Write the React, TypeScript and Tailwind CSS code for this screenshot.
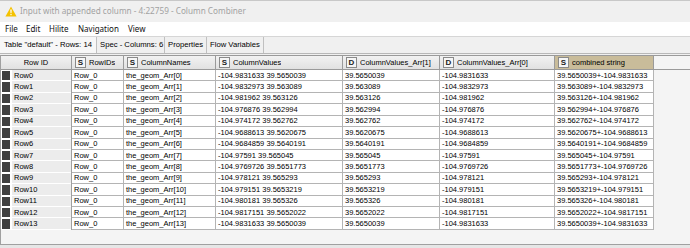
import React from "react";

const rows: [string, string, string][] = [
  ["-104.9831633", "39.5650039", "0"],
  ["-104.9832973", "39.563089", "1"],
  ["-104.981962", "39.563126", "2"],
  ["-104.976876", "39.562994", "3"],
  ["-104.974172", "39.562762", "4"],
  ["-104.9688613", "39.5620675", "5"],
  ["-104.9684859", "39.5640191", "6"],
  ["-104.97591", "39.565045", "7"],
  ["-104.9769726", "39.5651773", "8"],
  ["-104.978121", "39.565293", "9"],
  ["-104.979151", "39.5653219", "10"],
  ["-104.980181", "39.565326", "11"],
  ["-104.9817151", "39.5652022", "12"],
  ["-104.9831633", "39.5650039", "13"],
];

function TypeBox({ t }: { t: string }) {
  return (
    <span className="mr-[3px] flex h-[11px] w-[11px] shrink-0 items-center justify-center border border-[#8a8a8a] bg-[#f6f6f6] text-[8px] font-bold leading-none text-[#222]">
      {t}
    </span>
  );
}

function HeadCell({ t, label, w, tan }: { t: string; label: string; w: string; tan?: boolean }) {
  return (
    <div
      className={`flex h-full items-center border-r border-[#9a9a9a] pl-[3px] ${w} ${
        tan ? "bg-[#c9bc9a]" : "bg-gradient-to-b from-[#f2f2f2] to-[#e1e1e1]"
      }`}
    >
      <TypeBox t={t} />
      <span className="truncate">{label}</span>
    </div>
  );
}

export default function App() {
  return (
    <div
      className="flex h-[248px] w-[690px] flex-col overflow-hidden bg-[#f0f0f0] text-black"
      style={{ fontFamily: '"Liberation Sans", Arial, sans-serif' }}
    >
      {/* title bar */}
      <div
        className="flex h-[22px] shrink-0 items-center border-t border-[#c8c8c8] bg-[#f0f0f0] pl-[5px] text-[8.2px] text-[#a2a2a2]"
        style={{ fontFamily: '"Noto Sans", "Open Sans", sans-serif' }}
      >
        <svg width="12" height="11" viewBox="0 0 12 11" className="mr-[3px]">
          <path d="M6 0.5 L11.6 10.5 L0.4 10.5 Z" fill="#f4c200" />
          <path d="M5.3 3.5 H6.7 L6.5 7.3 H5.5 Z" fill="#fff" />
          <rect x="5.4" y="8" width="1.2" height="1.2" fill="#fff" />
        </svg>
        <span>Input with appended column - 4:22759 - Column Combiner</span>
      </div>
      {/* menu bar */}
      <div
        className="flex h-[15px] shrink-0 items-center border-b border-[#d6d6d6] bg-white pl-[5px] text-[8px] text-[#111]"
        style={{ fontFamily: '"Noto Sans", "Open Sans", sans-serif' }}
      >
        <span className="w-[21px]">File</span>
        <span className="w-[23px]">Edit</span>
        <span className="w-[29px]">Hilite</span>
        <span className="w-[50px]">Navigation</span>
        <span>View</span>
      </div>
      {/* tabs */}
      <div className="flex h-[17px] shrink-0 items-stretch border-b border-[#b8b8b8] bg-[#f0f0f0] text-[7.7px]">
        <div className="flex w-[97px] shrink-0 items-center whitespace-nowrap border-r border-[#c0c0c0] bg-[#f7f7f7] pl-[4px]">Table "default" - Rows: 14</div>
        <div className="flex w-[68px] shrink-0 items-center whitespace-nowrap border-r border-[#c0c0c0] pl-[3px]">Spec - Columns: 6</div>
        <div className="flex w-[42px] shrink-0 items-center whitespace-nowrap border-r border-[#c0c0c0] pl-[3px]">Properties</div>
        <div className="flex w-[57px] shrink-0 items-center whitespace-nowrap border-r border-[#c0c0c0] pl-[3px]">Flow Variables</div>
      </div>
      {/* table area */}
      <div className="mt-[1px] flex flex-1 flex-col border-l border-b border-[#a0a0a0] bg-[#f4f4f4] text-[7.5px]">
        {/* header */}
        <div className="flex h-[15px] shrink-0 items-stretch border-y border-[#9a9a9a]">
          <div className="flex w-[71px] items-center justify-center border-r border-[#9a9a9a] bg-gradient-to-b from-[#f2f2f2] to-[#e1e1e1]">
            Row ID
          </div>
          <HeadCell t="S" label="RowIDs" w="w-[52px]" />
          <HeadCell t="S" label="ColumnNames" w="w-[92px]" />
          <HeadCell t="S" label="ColumnValues" w="w-[127px]" />
          <HeadCell t="D" label="ColumnValues_Arr[1]" w="w-[97px]" />
          <HeadCell t="D" label="ColumnValues_Arr[0]" w="w-[115px]" />
          <HeadCell t="S" label="combined string" w="w-[99px]" tan />
        </div>
        {/* rows */}
        <div className="flex flex-col">
          {rows.map(([lon, lat, i]) => (
            <div key={i} className="flex h-[11.43px] items-stretch">
              <div className="flex w-[71px] items-stretch border-r border-[#a0a0a0] bg-white">
                <div className="my-[1px] ml-[1px] w-[8px] bg-[#3f3f3f]" />
                <div className="ml-[2px] flex flex-1 items-center border-b border-white bg-[#ececec] pl-[2px]">Row{i}</div>
              </div>
              <div className="flex w-[52px] items-center border-r border-b border-[#b4b4b4] bg-white pl-[2px]">Row_0</div>
              <div className="flex w-[92px] items-center border-r border-b border-[#b4b4b4] bg-white pl-[2px]">the_geom_Arr[{i}]</div>
              <div className="flex w-[127px] items-center border-r border-b border-[#b4b4b4] bg-white pl-[2px]">
                {lon} {lat}
              </div>
              <div className="flex w-[97px] items-center border-r border-b border-[#b4b4b4] bg-white pl-[2px]">{lat}</div>
              <div className="flex w-[115px] items-center border-r border-b border-[#b4b4b4] bg-white pl-[2px]">{lon}</div>
              <div className="flex w-[99px] items-center overflow-hidden whitespace-nowrap border-r border-b border-[#b4b4b4] bg-white pl-[2px]">
                {lat}+{lon}
              </div>
            </div>
          ))}
        </div>
      </div>
      <div className="h-[3px] shrink-0 bg-[#e6e6e6]" />
    </div>
  );
}
